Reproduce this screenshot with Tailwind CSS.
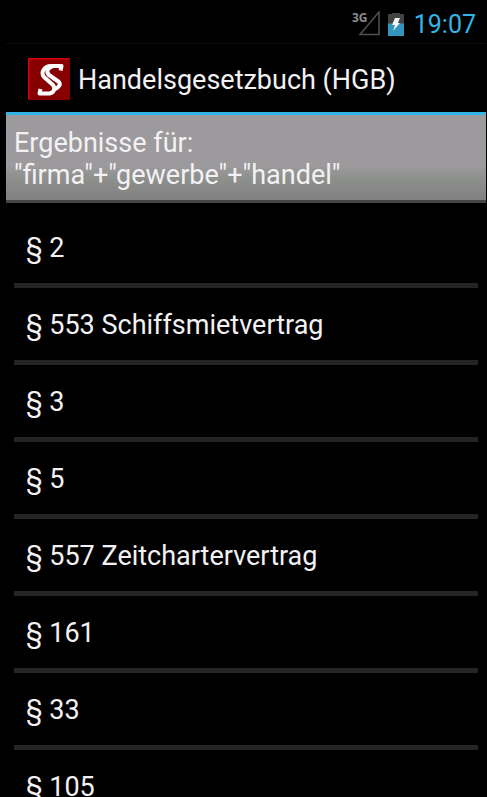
<!DOCTYPE html>
<html lang="de">
<head>
<meta charset="utf-8">
<meta name="viewport" content="width=device-width, initial-scale=1">
<title>Handelsgesetzbuch (HGB)</title>
<script src="https://cdn.jsdelivr.net/npm/@tailwindcss/browser@4"></script>
</head>
<body class="bg-black text-[#f3f1f3] font-['Roboto','Noto_Sans',sans-serif] text-[27px] leading-8 h-screen overflow-hidden pl-1.5 pr-px">
  <div class="flex h-11 items-center justify-end border-b border-[#0c0c0c] pr-2.5 pt-1.5">
    <svg class="mr-2 h-7 w-7" viewBox="0 0 28 28" role="img" aria-label="3G">
      <text x="0" y="11" font-family="Open Sans, sans-serif" font-size="12" font-weight="700" fill="#8a8a8a">3G</text>
      <path d="M27 1V23.500H8Z" fill="none" stroke="#505050" stroke-width="1.500"/>
    </svg>
    <svg class="mr-2.5 h-6 w-4" viewBox="0 0 16 24" role="img" aria-label="Akku wird geladen">
      <path d="M4 0H12V1H16V11H0V1H4Z" fill="#424242"/>
      <path d="M0 10.500H16V23H0Z" fill="#3195bd"/>
      <path d="M7 5H12L10 10H12L5 18L7 12H4Z" fill="#f4f4f4"/>
    </svg>
    <time class="text-[25px] text-[#33b5e5]">19:07</time>
  </div>
  <header class="flex h-[71px] items-center gap-2 border-b-3 border-[#33b5e5] pt-0.5 pl-[22px]">
    <svg class="h-[42px] w-[42px]" viewBox="0 0 42 42" aria-hidden="true">
      <path d="M0 0H42V42H0Z" fill="#860000"/>
      <path d="M0 41V0H41V1.500H1.500V41Z" fill="#d80000"/>
      <g fill="none" stroke="#fff" stroke-width="4" stroke-linejoin="round">
        <path d="M32.500 12.500L33.500 8H23C17 8 12 14 16 19L25 27C28 31 25 35.500 21 35.500H11.500L12.500 31"/>
        <path d="M25 8C19 10 18 14 21 17L31 24C33.500 27 29 31 25 32"/>
      </g>
    </svg>
    <h1 class="pt-0.5">Handelsgesetzbuch (HGB)</h1>
  </header>
  <main>
    <h2 class="border-b-3 border-[#444545] bg-linear-to-b from-[#9c9a9c] from-60% via-[#8d908c] via-75% to-[#828082] px-2 pt-3 pb-[9px]">Ergebnisse für:<br>"firma"+"gewerbe"+"handel"</h2>
    <ul class="divide-y-5 divide-[#232423] px-2 pt-2">
      <li><a href="#p2" class="flex h-[72px] items-center px-3 pt-0.5">§ 2</a></li>
      <li><a href="#p553" class="flex h-[72px] items-center px-3 pt-0.5">§ 553 Schiffsmietvertrag</a></li>
      <li><a href="#p3" class="flex h-[72px] items-center px-3 pt-0.5">§ 3</a></li>
      <li><a href="#p5" class="flex h-[72px] items-center px-3 pt-0.5">§ 5</a></li>
      <li><a href="#p557" class="flex h-[72px] items-center px-3 pt-0.5">§ 557 Zeitchartervertrag</a></li>
      <li><a href="#p161" class="flex h-[72px] items-center px-3 pt-0.5">§ 161</a></li>
      <li><a href="#p33" class="flex h-[72px] items-center px-3 pt-0.5">§ 33</a></li>
      <li><a href="#p105" class="flex h-[72px] items-center px-3 pt-0.5">§ 105</a></li>
    </ul>
  </main>
</body>
</html>
